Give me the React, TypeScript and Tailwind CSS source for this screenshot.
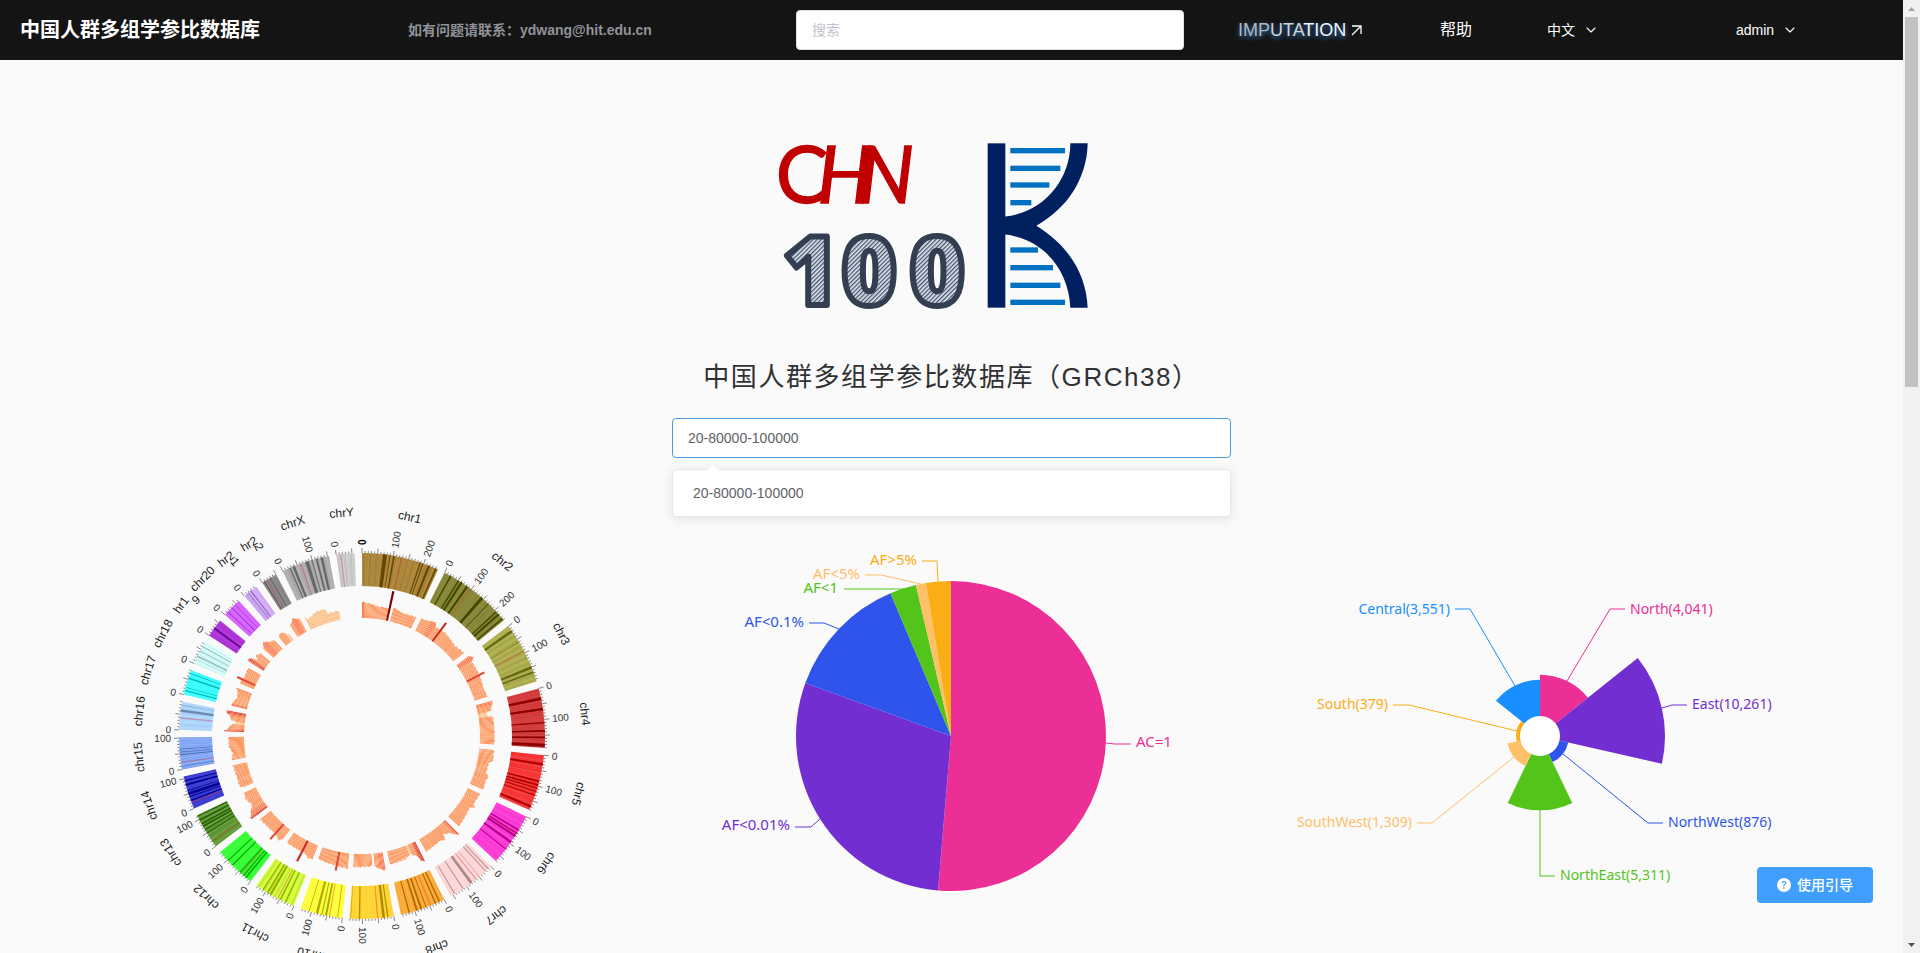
import { BsQuestionCircleFill } from "react-icons/bs";
import { ChevronDown } from "lucide-react";

type Pt = [number, number];

const rad = (deg: number) => (deg * Math.PI) / 180;

/** Point on a circle, with 0° at twelve o'clock and angles running clockwise. */
const polar = (r: number, deg: number): Pt => [r * Math.sin(rad(deg)), -r * Math.cos(rad(deg))];

const fmt = ([x, y]: Pt) => `${x.toFixed(2)} ${y.toFixed(2)}`;

function sector(r0: number, r1: number, a0: number, a1: number) {
  const large = a1 - a0 > 180 ? 1 : 0;
  const outer = `M${fmt(polar(r1, a0))}A${r1} ${r1} 0 ${large} 1 ${fmt(polar(r1, a1))}`;
  if (r0 === 0) return `${outer}L0 0Z`;
  return `${outer}L${fmt(polar(r0, a1))}A${r0} ${r0} 0 ${large} 0 ${fmt(polar(r0, a0))}Z`;
}

/* ---------- Genome ring ---------- */

interface Chromosome {
  name: string;
  size: number;
  color: string;
  /** Dark cytobands as [start, end] fractions of the length. */
  dark: Pt[];
  centromere?: number;
  /** Histogram outline as [fraction, height]; a height of 0 leaves a gap. */
  outline: Pt[];
  spikes?: Pt[];
  pale?: boolean;
}

const chromosomes: Chromosome[] = [
  { name: "chr1", size: 249, color: "#996600", dark: [[0.27, 0.32], [0.355, 0.365], [0.4, 0.42], [0.75, 0.765], [0.785, 0.8], [0.86, 0.89], [0.96, 0.98]], centromere: 0.5, outline: [[0, 16], [0.15, 14], [0.3, 12], [0.48, 12], [0.51, 0], [0.55, 0], [0.56, 14], [0.75, 11], [1, 12]], spikes: [[0.48, 30]] },
  { name: "chr2", size: 243, color: "#666600", dark: [[0.08, 0.1], [0.2, 0.22], [0.24, 0.27], [0.33, 0.36], [0.57, 0.61], [0.7, 0.71], [0.84, 0.86], [0.88, 0.91], [0.96, 0.98]], centromere: 0.39, outline: [[0, 13], [0.1, 14], [0.25, 17], [0.32, 13], [0.5, 14], [0.8, 11], [1, 13]], spikes: [[0.39, 23]] },
  { name: "chr3", size: 198, color: "#99991E", dark: [[0.08, 0.12], [0.3, 0.31], [0.74, 0.78], [0.83, 0.86]], centromere: 0.46, outline: [[0, 15], [0.08, 18], [0.15, 14], [0.5, 14], [0.8, 12], [1, 13]], spikes: [[0.46, 20]] },
  { name: "chr4", size: 191, color: "#CC0000", dark: [[0.15, 0.2], [0.33, 0.37], [0.57, 0.59], [0.7, 0.73], [0.81, 0.84], [0.93, 0.98]], centromere: 0.27, outline: [[0, 17], [0.2, 13], [0.25, 8], [0.32, 8], [0.36, 14], [1, 14]] },
  { name: "chr5", size: 181, color: "#FF0000", dark: [[0.14, 0.18], [0.45, 0.48], [0.52, 0.55], [0.58, 0.6], [0.64, 0.66], [0.71, 0.73], [0.91, 0.95]], centromere: 0.28, outline: [[0, 14], [0.25, 15], [0.35, 11], [0.6, 11], [0.66, 15], [0.75, 13], [1, 14]] },
  { name: "chr6", size: 171, color: "#FF00CC", dark: [[0.27, 0.3], [0.34, 0.37], [0.39, 0.43], [0.53, 0.57], [0.7, 0.72]], centromere: 0.35, outline: [[0, 13], [0.3, 12], [0.36, 15], [0.44, 11], [1, 14]] },
  { name: "chr7", size: 159, color: "#FFCCCC", dark: [[0.06, 0.08], [0.13, 0.15], [0.3, 0.31], [0.48, 0.54], [0.7, 0.72], [0.9, 0.92]], centromere: 0.38, outline: [[0, 20], [0.06, 18], [0.15, 13], [0.32, 9], [0.4, 15], [0.5, 12], [1, 14]] },
  { name: "chr8", size: 146, color: "#FF9900", dark: [[0.1, 0.13], [0.19, 0.22], [0.42, 0.44], [0.52, 0.56], [0.62, 0.66], [0.8, 0.83]], centromere: 0.31, outline: [[0, 22], [0.08, 20], [0.14, 14], [0.3, 9], [0.5, 12], [1, 13]] },
  { name: "chr9", size: 141, color: "#FFCC00", dark: [[0.12, 0.15], [0.2, 0.26], [0.76, 0.79], [0.97, 0.98]], centromere: 0.35, outline: [[0, 18], [0.15, 16], [0.32, 13], [0.34, 0], [0.4, 0], [0.42, 12], [1, 13]] },
  { name: "chr10", size: 136, color: "#FFFF00", dark: [[0.1, 0.12], [0.36, 0.41], [0.47, 0.5], [0.57, 0.63], [0.78, 0.8]], centromere: 0.29, outline: [[0, 15], [0.3, 14], [1, 12]], spikes: [[0.33, 19]] },
  { name: "chr11", size: 135, color: "#CCFF00", dark: [[0.2, 0.23], [0.33, 0.36], [0.58, 0.63], [0.67, 0.71], [0.8, 0.83]], centromere: 0.4, outline: [[0, 14], [0.15, 15], [0.3, 12], [1, 12]], spikes: [[0.38, 23]] },
  { name: "chr12", size: 134, color: "#00FF00", dark: [[0.12, 0.16], [0.2, 0.23], [0.31, 0.34], [0.56, 0.59], [0.71, 0.74]], centromere: 0.27, outline: [[0, 12], [0.1, 15], [0.3, 12], [1, 13]], spikes: [[0.28, 20]] },
  { name: "chr13", size: 115, color: "#358000", dark: [[0.42, 0.45], [0.53, 0.56], [0.63, 0.67], [0.71, 0.75], [0.83, 0.87], [0.95, 0.98]], centromere: 0.15, outline: [[0, 21], [0.08, 19], [0.25, 16], [0.45, 11], [0.75, 14], [1, 12]] },
  { name: "chr14", size: 107, color: "#0000CC", dark: [[0.24, 0.28], [0.36, 0.39], [0.43, 0.51], [0.56, 0.58], [0.72, 0.77], [0.85, 0.88]], centromere: 0.17, outline: [[0, 9], [0.08, 14], [0.5, 13], [1, 14]] },
  { name: "chr15", size: 103, color: "#6699FF", dark: [[0.08, 0.1], [0.44, 0.47], [0.53, 0.55], [0.62, 0.64]], centromere: 0.2, outline: [[0, 14], [0.3, 12], [0.6, 15], [1, 15]] },
  { name: "chr16", size: 90, color: "#99CCFF", dark: [[0.64, 0.73], [0.87, 0.89]], centromere: 0.41, outline: [[0, 21], [0.1, 16], [0.3, 14], [0.42, 9], [0.52, 9], [0.58, 13], [0.8, 16], [0.9, 19], [1, 20]] },
  { name: "chr17", size: 81, color: "#00FFFF", dark: [[0.14, 0.18], [0.28, 0.31], [0.64, 0.7], [0.85, 0.88]], outline: [[0, 16], [0.2, 15], [0.5, 12], [0.9, 14], [1, 17]] },
  { name: "chr18", size: 78, color: "#CCFFFF", dark: [[0.17, 0.19], [0.3, 0.35], [0.55, 0.58], [0.76, 0.79]], outline: [[0, 14], [0.2, 15], [0.35, 13], [1, 14]], spikes: [[0.2, 20]] },
  { name: "chr19", size: 59, color: "#9900CC", dark: [[0.43, 0.52]], outline: [[0, 18], [0.2, 19], [0.45, 11], [0.7, 15], [1, 12]] },
  { name: "chr20", size: 63, color: "#CC33FF", dark: [[0.2, 0.22], [0.48, 0.51], [0.72, 0.74]], outline: [[0, 13], [0.35, 18], [0.6, 14], [1, 11]] },
  { name: "chr21", size: 48, color: "#CC99FF", dark: [[0.3, 0.36], [0.5, 0.57]], outline: [[0, 11], [0.4, 13], [1, 6]] },
  { name: "chr22", size: 51, color: "#666666", dark: [[0.12, 0.16], [0.55, 0.58]], centromere: 0.28, outline: [[0, 13], [0.5, 18], [1, 14]] },
  { name: "chrX", size: 155, color: "#999999", dark: [[0.15, 0.18], [0.22, 0.27], [0.5, 0.57], [0.63, 0.65], [0.72, 0.76], [0.82, 0.87]], centromere: 0.39, outline: [[0, 14], [0.06, 10], [0.35, 14], [0.6, 14], [0.66, 9], [1, 9]], pale: true },
  { name: "chrY", size: 59, color: "#C0C0C0", dark: [], centromere: 0.22, outline: [] },
];

const brokenLabels: Record<string, { text: string; x: number; y: number; turn: number }[]> = {
  chr19: [
    { text: "hr1", x: -181, y: -131, turn: -54 },
    { text: "9", x: -166, y: -136, turn: -40 },
  ],
  chr21: [
    { text: "hr2", x: -136, y: -177, turn: -37 },
    { text: "1", x: -127, y: -174, turn: 50 },
  ],
  chr22: [
    { text: "hr2", x: -113, y: -192, turn: -31 },
    { text: "2", x: -103, y: -189, turn: 60 },
  ],
};

const GAP = (0.04 * 180) / Math.PI;
const totalSize = chromosomes.reduce((sum, c) => sum + c.size, 0);
const degPerMb = (360 - GAP * chromosomes.length) / totalSize;

const R_IN = 150;
const R_OUT = 183;
const R_HIST = 118;

function heightAt(outline: Pt[], t: number) {
  for (let i = 1; i < outline.length; i++) {
    const [t0, h0] = outline[i - 1];
    const [t1, h1] = outline[i];
    if (t <= t1) {
      if (h0 === 0 || h1 === 0) return t1 - t < 0.01 ? h1 : h0 === 0 ? 0 : h0;
      return h0 + ((h1 - h0) * (t - t0)) / (t1 - t0);
    }
  }
  return 0;
}

function heat(h: number, pale?: boolean) {
  if (pale && h < 15) return "#fdbd82";
  if (h > 26) return "#7f0000";
  if (h > 21) return "#c62a20";
  if (h > 18.5) return "#dc4632";
  if (h > 15.5) return "#f8784c";
  if (h < 9.5) return "#fdc690";
  return "#fc9459";
}

function ChromosomeArc({ c, start, index }: { c: Chromosome; start: number; index: number }) {
  const span = c.size * degPerMb;
  const at = (t: number) => start + span * t;
  const stripes = Math.round(c.size / 4);
  const bins = Math.round(c.size / 5);
  const ticks = Array.from({ length: Math.floor(c.size / 10) + 1 }, (_, i) => i * 10);

  return (
    <g>
      <path d={sector(R_IN, R_OUT, start, at(1))} fill={c.color} fillOpacity={0.74} />
      {Array.from({ length: stripes }, (_, i) => {
        const n = (i * 37 + index * 17 + i * i * 11) % 10;
        if (n < 4) return null;
        const t = i / stripes;
        return (
          <path
            key={i}
            d={sector(R_IN, R_OUT, at(t), at(t + (n % 2 ? 0.35 : 0.6) / stripes))}
            fill={n > 7 ? "#000" : c.color}
            fillOpacity={n > 7 ? 0.14 : 0.35}
          />
        );
      })}
      {c.dark.map(([a, b]) => (
        <g key={a}>
          <path d={sector(R_IN, R_OUT, at(a), at(b))} fill={c.color} />
          <path d={sector(R_IN, R_OUT, at(a), at(b))} fill="#000" fillOpacity={0.32} />
        </g>
      ))}
      {c.centromere !== undefined && (
        <path
          d={sector(R_IN, R_OUT, at(c.centromere), at(c.centromere + 4 / c.size))}
          fill="#d92f2f"
          fillOpacity={0.4}
        />
      )}

      {ticks.map((mb) => {
        const a = start + mb * degPerMb;
        const [x1, y1] = polar(R_OUT, a);
        const [x2, y2] = polar(R_OUT + (mb % 50 === 0 ? 5 : 2), a);
        return <line key={mb} x1={x1} y1={y1} x2={x2} y2={y2} stroke="#555" strokeWidth={0.7} />;
      })}
      {ticks
        .filter((mb) => mb % 100 === 0)
        .map((mb) => {
          const a = start + mb * degPerMb;
          const left = a > 180;
          return (
            <text
              key={mb}
              transform={`translate(${fmt(polar(R_OUT + 8, a))}) rotate(${left ? a + 90 : a - 90})`}
              textAnchor={left ? "end" : "start"}
              dominantBaseline="central"
              fontSize={10}
              fill={a === 0 ? "#000" : "#333"}
              fontWeight={a === 0 ? 700 : 400}
            >
              {mb}
            </text>
          );
        })}

      {brokenLabels[c.name] ? (
        brokenLabels[c.name].map((p) => (
          <text
            key={p.text}
            transform={`translate(${p.x} ${p.y}) rotate(${p.turn})`}
            textAnchor="middle"
            dominantBaseline="central"
            fontSize={12}
            fill="#222"
          >
            {p.text}
          </text>
        ))
      ) : (
        <text
          transform={`translate(${fmt(polar(220, at(0.5)))}) rotate(${at(0.5)})`}
          textAnchor="middle"
          fontSize={12}
          fill="#222"
        >
          {c.name}
        </text>
      )}

      {c.outline.length > 0 &&
        Array.from({ length: bins }, (_, i) => {
          const h = heightAt(c.outline, (i + 0.5) / bins);
          if (h === 0) return null;
          const wobble = ((i * 7 + index * 3) % 4) * 0.3;
          return (
            <path
              key={i}
              d={sector(R_HIST, R_HIST + h + wobble, at(i / bins), at((i + 0.9) / bins))}
              fill={heat(h, c.pale)}
            />
          );
        })}
      {c.spikes?.map(([t, h]) => (
        <path key={t} d={sector(R_HIST, R_HIST + h, at(t), at(t + 9 / c.size))} fill={heat(h)} />
      ))}
    </g>
  );
}

function GenomeRing() {
  let cursor = 0;
  return (
    <svg
      viewBox="-250 -250 500 500"
      className="h-[500px] w-[500px] overflow-visible font-['Liberation_Sans',Arial,sans-serif]"
      role="img"
      aria-label="chr1–chrY"
    >
      {chromosomes.map((c, i) => {
        const start = cursor;
        cursor += c.size * degPerMb + GAP;
        return <ChromosomeArc key={c.name} c={c} start={start} index={i} />;
      })}
    </svg>
  );
}

/* ---------- Pie charts ---------- */

interface Slice {
  label: string;
  color: string;
  from: number;
  to: number;
  radius: number;
  leader: string;
  textX: number;
  textY: number;
  end?: boolean;
}

const frequency: Slice[] = [
  { label: "AC=1", color: "#eb2f96", from: 0, to: 184.8, radius: 155, leader: "155,7 164,8 180,8", textX: 185, textY: 11 },
  { label: "AF<0.01%", color: "#722ed1", from: 184.8, to: 290, radius: 155, leader: "-131,83 -140,91 -156,91", textX: -161, textY: 94, end: true },
  { label: "AF<0.1%", color: "#2f54eb", from: 290, to: 337, radius: 155, leader: "-112,-107 -127,-113 -142,-113", textX: -147, textY: -109, end: true },
  { label: "AF<1", color: "#52c41a", from: 337, to: 346.9, radius: 155, leader: "-47,-147 -93,-147 -107,-147", textX: -113, textY: -143, end: true },
  { label: "AF<5%", color: "#ffc069", from: 346.9, to: 350.7, radius: 155, leader: "-30,-152 -70,-161 -86,-161", textX: -91, textY: -157, end: true },
  { label: "AF>5%", color: "#faad14", from: 350.7, to: 360, radius: 155, leader: "-13,-154 -14,-175 -29,-175", textX: -34, textY: -171, end: true },
];

const STEP = 360 / 7;
const roseRadius = (n: number) => 20 + (105 * n) / 10261;

const regions: Slice[] = [
  { label: "North(4,041)", color: "#eb2f96", from: 0, to: STEP, radius: roseRadius(4041), leader: "27,-55 70,-127 85,-127", textX: 90, textY: -122 },
  { label: "East(10,261)", color: "#722ed1", from: STEP, to: STEP * 2, radius: roseRadius(10261), leader: "122,-28 132,-31 147,-31", textX: 152, textY: -27 },
  { label: "NorthWest(876)", color: "#2f54eb", from: STEP * 2, to: STEP * 3, radius: roseRadius(876), leader: "23,18 108,87 123,87", textX: 128, textY: 91 },
  { label: "NorthEast(5,311)", color: "#52c41a", from: STEP * 3, to: STEP * 4, radius: roseRadius(5311), leader: "0,74 0,140 15,140", textX: 20, textY: 144 },
  { label: "SouthWest(1,309)", color: "#ffc069", from: STEP * 4, to: STEP * 5, radius: roseRadius(1309), leader: "-26,21 -108,87 -123,87", textX: -128, textY: 91, end: true },
  { label: "South(379)", color: "#faad14", from: STEP * 5, to: STEP * 6, radius: roseRadius(379), leader: "-23,-5 -131,-31 -147,-31", textX: -152, textY: -27, end: true },
  { label: "Central(3,551)", color: "#1890ff", from: STEP * 6, to: 360, radius: roseRadius(3551), leader: "-25,-50 -70,-127 -85,-127", textX: -90, textY: -122, end: true },
];

function PieChart({
  slices,
  hole = 0,
  fontSize,
  label,
}: {
  slices: Slice[];
  hole?: number;
  fontSize: number;
  label: string;
}) {
  return (
    <svg
      viewBox="-250 -250 500 500"
      className="h-[500px] w-[500px] overflow-visible font-['Noto_Sans','Noto_Sans_CJK_SC',sans-serif]"
      fontSize={fontSize}
      role="img"
      aria-label={label}
    >
      {hole > 0 && <circle r={hole} fill="#fff" />}
      {slices.map((s) => (
        <g key={s.label}>
          <path d={sector(hole, s.radius, s.from, s.to)} fill={s.color} />
          <polyline points={s.leader} fill="none" stroke={s.color} strokeWidth={1} />
          <text x={s.textX} y={s.textY} textAnchor={s.end ? "end" : "start"} fill={s.color}>
            {s.label}
          </text>
        </g>
      ))}
    </svg>
  );
}

/* ---------- Logo ---------- */

const rungs: [number, number][] = [
  [54, 914],
  [107, 900],
  [157, 867],
  [210, 813],
  [352, 833],
  [405, 878],
  [458, 900],
  [509, 914],
];

function Logo() {
  return (
    <svg
      viewBox="2 0 1146 570"
      className="h-[190px] w-[382px] overflow-visible"
      role="img"
      aria-label="CHN 100K"
    >
      <defs>
        <pattern id="hatch" width="9" height="9" patternUnits="userSpaceOnUse" patternTransform="rotate(45)">
          <rect width="9" height="9" fill="#e3e9f2" />
          <rect width="4" height="9" fill="#44546a" />
        </pattern>
      </defs>
      <g fill="#c00000" stroke="#c00000" strokeWidth="4" fontSize="236" className="font-['Lato',sans-serif]">
        <text x="46" y="219">
          C
        </text>
        <text x="170 294" y="219" className="italic">
          HN
        </text>
      </g>
      <text
        x="68 243 447"
        y="524"
        fontSize="286"
        fill="url(#hatch)"
        stroke="#333f50"
        strokeWidth="18"
        strokeLinejoin="round"
        className="font-['Open_Sans','Noto_Sans',sans-serif] font-extrabold"
      >
        100
      </text>
      <g fill="#0070c0">
        {rungs.map(([y, end]) => (
          <rect key={y} x="750" y={y} width={end - 750} height="16" />
        ))}
      </g>
      <g fill="#002060">
        <rect x="682" y="40" width="53" height="493" />
        <path d="M930 40H982C980 145 922 235 828 287C922 345 978 430 982 533H930C925 415 845 325 730 313V260C845 250 930 155 930 40Z" />
      </g>
    </svg>
  );
}

/* ---------- Page ---------- */

function Header() {
  return (
    <header className="grid h-[60px] shrink-0 grid-cols-[408fr_388fr_442fr_202fr_107fr_189fr_167fr] items-center bg-[#141414] text-sm text-white">
      <a href="#home" className="pl-5 text-xl font-bold whitespace-nowrap">
        中国人群多组学参比数据库
      </a>
      <p className="font-bold whitespace-nowrap text-[#909399]">如有问题请联系：ydwang@hit.edu.cn</p>
      <div className="pr-[54px]">
        <input
          type="search"
          aria-label="搜索"
          placeholder="搜索"
          className="h-10 w-full rounded border border-[#dcdfe6] bg-white px-[15px] text-sm text-[#606266] outline-none placeholder:text-[#c0c4cc]"
        />
      </div>
      <a href="#imputation" className="flex items-center gap-1">
        <span className="text-lg [text-shadow:0_2px_5px_#3f9cffcc]">
          <span className="text-[#b4b8bd]">IMP</span>
          <span className="text-[#d0d4d9]">UTA</span>
          <span className="text-[#f2f6fa]">TION</span>
        </span>
        <svg viewBox="0 0 12 12" className="size-3" fill="none" stroke="currentColor" strokeWidth="1.3">
          <path d="M2 2H11V10M11 2L2 11" />
        </svg>
      </a>
      <a href="#help" className="text-base">
        帮助
      </a>
      <button type="button" className="flex items-center gap-2">
        中文
        <ChevronDown className="size-4" strokeWidth={1.6} />
      </button>
      <button type="button" className="flex items-center gap-2">
        admin
        <ChevronDown className="size-4" strokeWidth={1.6} />
      </button>
    </header>
  );
}

function RegionSearch() {
  return (
    <div className="relative z-10 mt-[21px] w-[559px]">
      <input
        type="text"
        aria-label="20-80000-100000"
        defaultValue="20-80000-100000"
        className="block h-10 w-full rounded border border-[#4b9be0] bg-white px-[15px] text-sm text-[#606266] outline-none"
      />
      <ul className="absolute top-full right-0 left-0 mt-[11px] rounded border border-[#e4e7ed] bg-white py-1.5 shadow-[0_2px_12px_rgba(0,0,0,0.1)]">
        <li className="absolute -top-1 left-9 size-2 rotate-45 bg-white" aria-hidden="true" />
        <li className="px-5 text-sm leading-[34px] text-[#606266]">20-80000-100000</li>
      </ul>
    </div>
  );
}

function ScrollTrack() {
  return (
    <div className="flex w-[17px] shrink-0 flex-col items-center justify-between bg-[#f1f1f1]" aria-hidden="true">
      <div className="flex h-[387px] w-full flex-col items-center">
        <svg viewBox="0 0 17 17" className="size-[17px] shrink-0">
          <path d="M5 11H12L8.5 7Z" fill="#a3a3a3" />
        </svg>
        <div className="w-[13px] grow bg-[#c1c1c1]" />
      </div>
      <svg viewBox="0 0 17 17" className="size-[17px] shrink-0">
        <path d="M5 7H12L8.5 11Z" fill="#505050" />
      </svg>
    </div>
  );
}

export default function App() {
  return (
    <div className="flex h-screen overflow-hidden bg-[#fafafa] font-['Liberation_Sans','Noto_Sans_CJK_SC',Arial,sans-serif]">
      <div className="relative flex min-w-0 grow flex-col overflow-hidden">
        <Header />
        <main className="flex flex-col items-center pt-[70px]">
          <Logo />
          <h1 className="mt-[37px] text-[26px] leading-10 tracking-[0.06em] text-[#303133]">
            中国人群多组学参比数据库（GRCh38）
          </h1>
          <RegionSearch />
          <section className="mt-7 grid w-full grid-cols-3 justify-items-center pr-[68px] pl-[67px]">
            <GenomeRing />
            <PieChart slices={frequency} fontSize={15} label="AF" />
            <PieChart slices={regions} fontSize={14} hole={20} label="North, East, South, West" />
          </section>
        </main>
        <button
          type="button"
          className="absolute right-[30px] bottom-[50px] z-20 flex h-9 items-center gap-1.5 rounded bg-[#409eff] px-5 text-sm font-medium text-white"
        >
          <BsQuestionCircleFill className="size-[14px]" />
          使用引导
        </button>
      </div>
      <ScrollTrack />
    </div>
  );
}
